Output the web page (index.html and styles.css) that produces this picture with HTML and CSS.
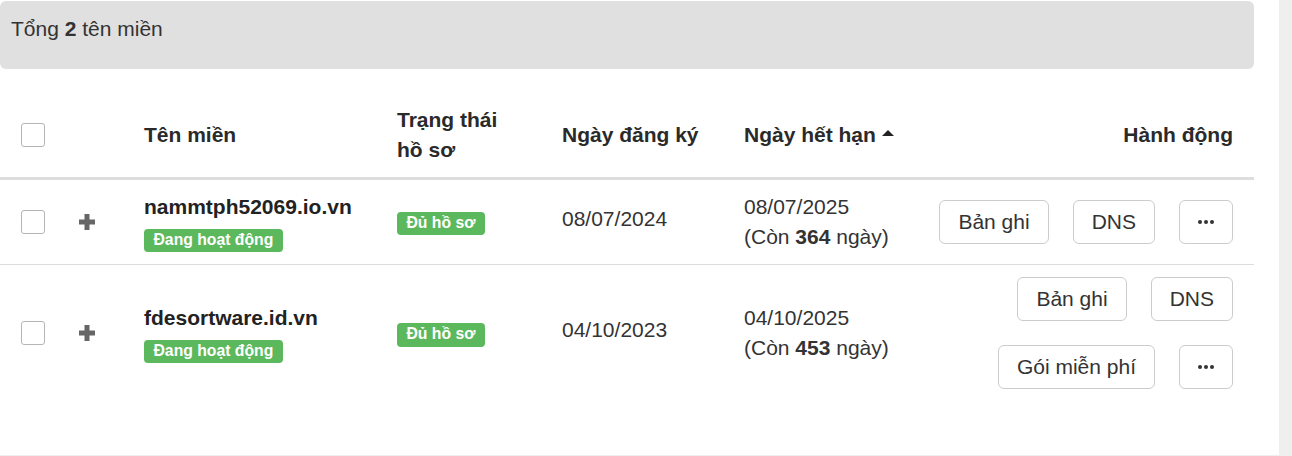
FILE: index.html
```html
<!DOCTYPE html>
<html lang="vi">
<head>
<meta charset="utf-8">
<title>Tên miền</title>
<link rel="stylesheet" href="styles.css">
</head>
<body>
<div class="page">
  <main class="main">
    <div class="summary">Tổng <b>2</b> tên miền</div>
    <table class="domains">
      <colgroup>
        <col class="c-check"><col class="c-plus"><col class="c-name"><col class="c-status"><col class="c-reg"><col class="c-exp"><col class="c-act">
      </colgroup>
      <thead>
        <tr>
          <th class="cell-check"><span class="checkbox"></span></th>
          <th></th>
          <th>Tên miền</th>
          <th>Trạng thái<br>hồ sơ</th>
          <th>Ngày đăng ký</th>
          <th><span class="sort">Ngày hết hạn<span class="caret"></span></span></th>
          <th class="cell-act">Hành động</th>
        </tr>
      </thead>
      <tbody>
        <tr>
          <td class="cell-check"><span class="checkbox"></span></td>
          <td class="cell-plus"><svg class="plus" width="16" height="16" viewBox="0 0 16 16"><rect x="5.5" y="0" width="5" height="16" fill="#666"/><rect x="0" y="5.5" width="16" height="5" fill="#666"/></svg></td>
          <td><div class="domain">nammtph52069.io.vn</div><div class="badge-line"><span class="badge">Đang hoạt động</span></div></td>
          <td><span class="badge">Đủ hồ sơ</span></td>
          <td class="cell-reg">08/07/2024</td>
          <td>08/07/2025<br>(Còn <b>364</b> ngày)</td>
          <td class="cell-act">
            <div class="actions">
              <button class="btn">Bản ghi</button>
              <button class="btn">DNS</button>
              <button class="btn btn-more"><svg width="16" height="4" viewBox="0 0 16 4"><circle cx="2" cy="2" r="2" fill="#333"/><circle cx="8" cy="2" r="2" fill="#333"/><circle cx="14" cy="2" r="2" fill="#333"/></svg></button>
            </div>
          </td>
        </tr>
        <tr>
          <td class="cell-check"><span class="checkbox"></span></td>
          <td class="cell-plus"><svg class="plus" width="16" height="16" viewBox="0 0 16 16"><rect x="5.5" y="0" width="5" height="16" fill="#666"/><rect x="0" y="5.5" width="16" height="5" fill="#666"/></svg></td>
          <td><div class="domain">fdesortware.id.vn</div><div class="badge-line"><span class="badge">Đang hoạt động</span></div></td>
          <td><span class="badge">Đủ hồ sơ</span></td>
          <td class="cell-reg">04/10/2023</td>
          <td>04/10/2025<br>(Còn <b>453</b> ngày)</td>
          <td class="cell-act">
            <div class="actions">
              <button class="btn">Bản ghi</button>
              <button class="btn">DNS</button>
              <button class="btn">Gói miễn phí</button>
              <button class="btn btn-more"><svg width="16" height="4" viewBox="0 0 16 4"><circle cx="2" cy="2" r="2" fill="#333"/><circle cx="8" cy="2" r="2" fill="#333"/><circle cx="14" cy="2" r="2" fill="#333"/></svg></button>
            </div>
          </td>
        </tr>
      </tbody>
    </table>
  </main>
  <div class="scrollbar"></div>
</div>
</body>
</html>
```
FILE: styles.css
```css
* { box-sizing: border-box; }
html, body { margin: 0; padding: 0; background: #fff; }
body {
  font-family: "Liberation Sans", Arial, sans-serif;
  font-size: 21px;
  line-height: 30px;
  color: #333;
}
.page {
  display: flex;
  height: 456px;
  overflow: hidden;
}
.main {
  flex: 1;
  height: 456px;
  padding: 1px 25px 0 0;
  border-bottom: 1px solid #eee;
}
.scrollbar {
  width: 13px;
  background: #efefef;
}
.summary {
  background: #e0e0e0;
  border-radius: 6px;
  padding: 13px 11px 25px;
  height: 68px;
  margin-bottom: 24px;
}
.summary b { font-weight: bold; }
.domains {
  width: 100%;
  border-collapse: collapse;
  table-layout: fixed;
}
.c-check { width: 66px; }
.c-plus { width: 66px; }
.c-name { width: 253px; }
.c-status { width: 165px; }
.c-reg { width: 182px; }
.c-exp { width: 173px; }
.domains th, .domains td {
  padding: 12px;
  vertical-align: middle;
  text-align: left;
}
.domains th {
  font-weight: bold;
  color: #2a2a2a;
  border-bottom: 3px solid #ddd;
}
.domains tbody tr:first-child td {
  border-bottom: 1px solid #ddd;
}
.domains .cell-check { padding-left: 21px; padding-right: 0; }
.domains .cell-plus { padding-left: 13px; padding-right: 0; }
.domains .cell-reg { padding-bottom: 19px; }
.domains .cell-act { text-align: right; padding-right: 21px; }
.checkbox {
  display: block;
  width: 24px;
  height: 24px;
  border: 1px solid #b5b5b5;
  border-radius: 3px;
  background: #fff;
}
.plus { display: block; }
.domain {
  font-weight: bold;
  color: #222;
}
.badge-line {
  margin-top: 6px;
  line-height: 1;
}
.badge {
  display: inline-block;
  background: #5cb85c;
  color: #fff;
  font-weight: bold;
  font-size: 15.75px;
  line-height: 1;
  padding: 3px 9.5px 5px;
  border-radius: 4px;
  vertical-align: middle;
}
.sort { white-space: nowrap; }
.caret {
  display: inline-block;
  width: 0;
  height: 0;
  margin-left: 6px;
  border-left: 6px solid transparent;
  border-right: 6px solid transparent;
  border-bottom: 6px solid #222;
  vertical-align: 6px;
}
.actions {
  display: flex;
  flex-wrap: wrap;
  justify-content: flex-end;
  gap: 24px;
}
.btn {
  font-family: inherit;
  font-size: 21px;
  line-height: 30px;
  color: #333;
  background: #fff;
  border: 1px solid #ccc;
  border-radius: 6px;
  padding: 6px 18px;
  height: 44px;
  margin: 0;
}
.btn-more {
  width: 54px;
  padding: 0;
  display: flex;
  align-items: center;
  justify-content: center;
}
```
